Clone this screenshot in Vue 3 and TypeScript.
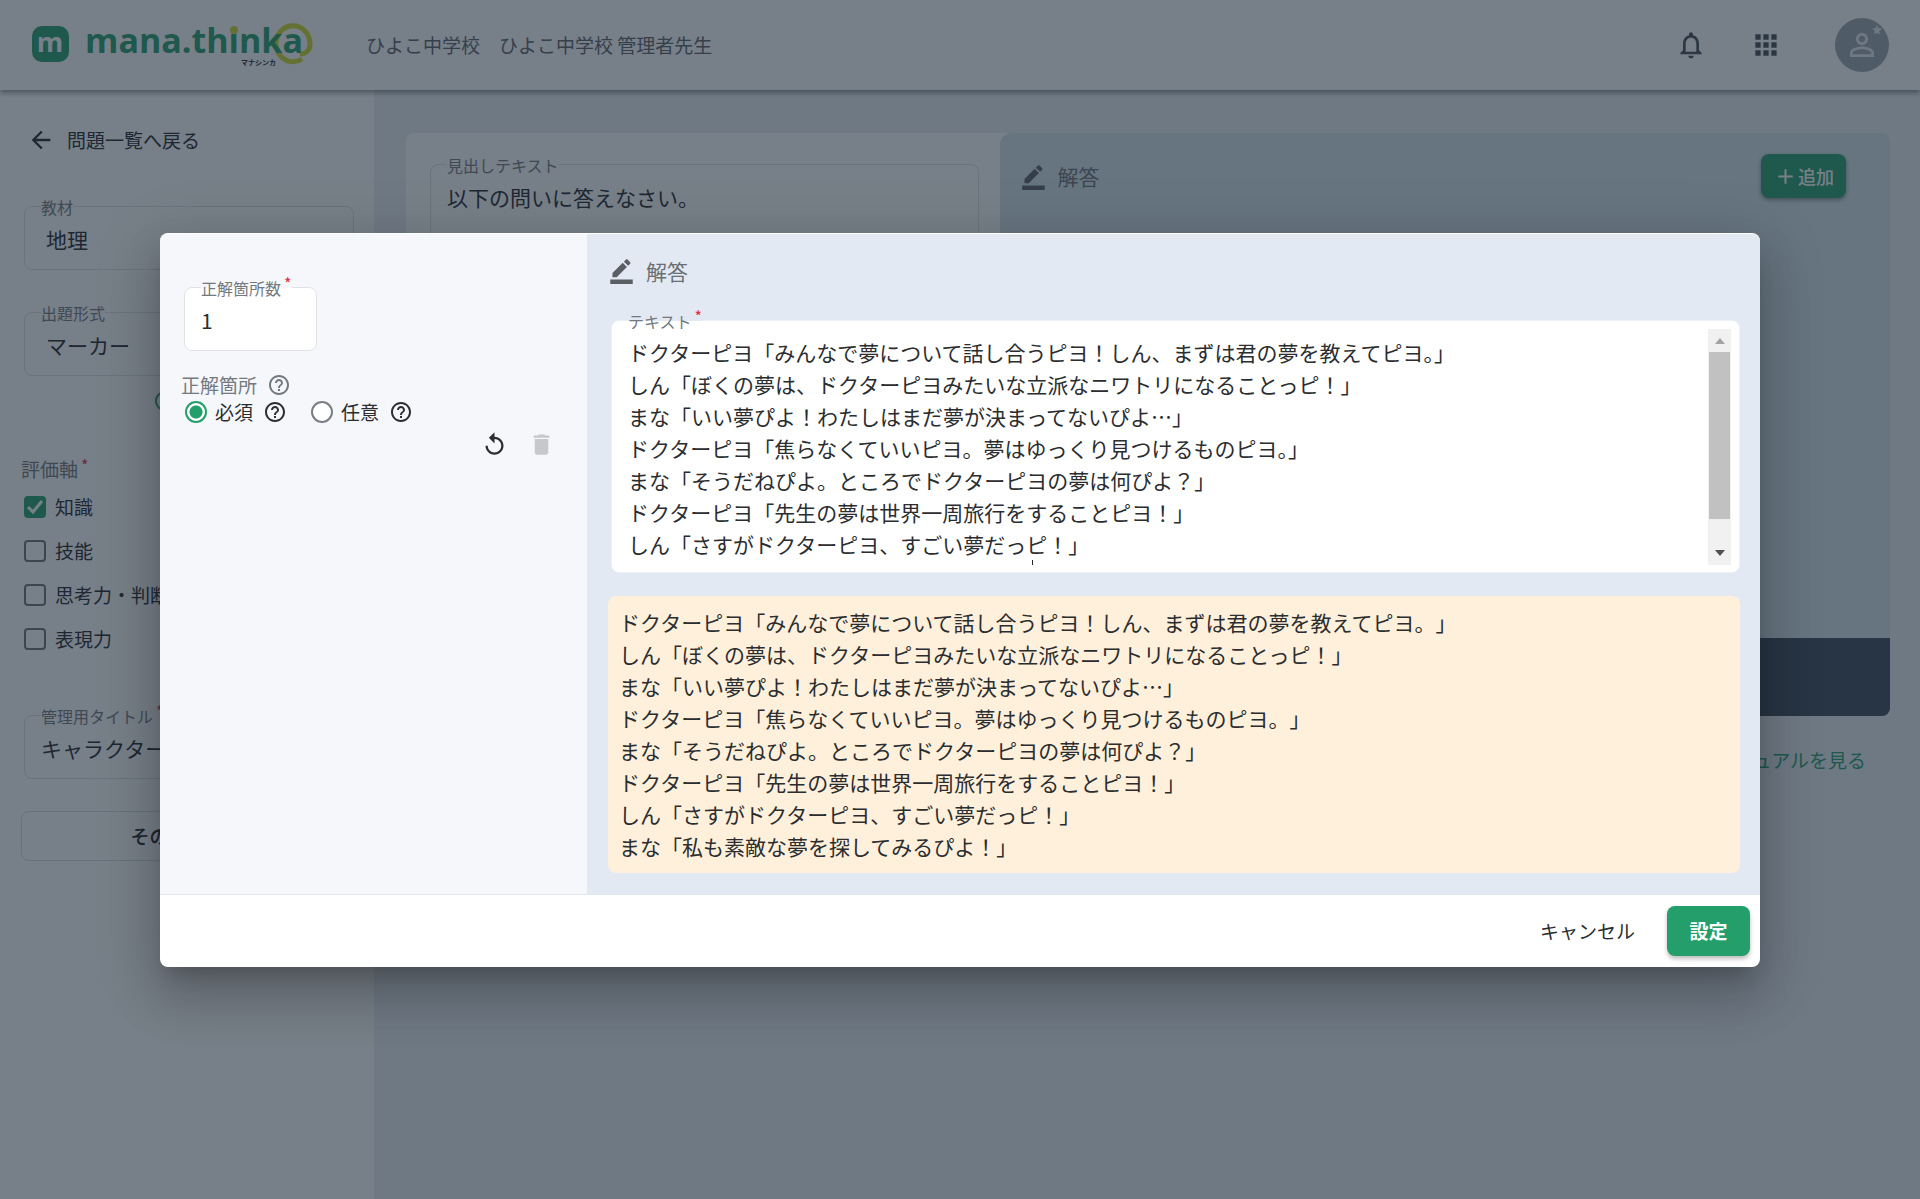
<script setup lang="ts">
import { ref } from 'vue'

const lines: string[] = [
  'ドクターピヨ「みんなで夢について話し合うピヨ！しん、まずは君の夢を教えてピヨ。」',
  'しん「ぼくの夢は、ドクターピヨみたいな立派なニワトリになることっピ！」',
  'まな「いい夢ぴよ！わたしはまだ夢が決まってないぴよ…」',
  'ドクターピヨ「焦らなくていいピヨ。夢はゆっくり見つけるものピヨ。」',
  'まな「そうだねぴよ。ところでドクターピヨの夢は何ぴよ？」',
  'ドクターピヨ「先生の夢は世界一周旅行をすることピヨ！」',
  'しん「さすがドクターピヨ、すごい夢だっピ！」',
  'まな「私も素敵な夢を探してみるぴよ！」',
]

const answerText = ref(lines.join('\n'))
const answerCount = ref('1')
const placement = ref('required')
const subject = ref('地理')
const format = ref('マーカー')
const title = ref('キャラクターの夢')
const heading = ref('以下の問いに答えなさい。')
const axes = ref([
  { label: '知識', checked: true },
  { label: '技能', checked: false },
  { label: '思考力・判断力', checked: false },
  { label: '表現力', checked: false },
])

const icons = {
  bell: 'M12 22c1.1 0 2-.9 2-2h-4c0 1.1.9 2 2 2zm6-6v-5c0-3.07-1.63-5.64-4.5-6.32V4c0-.83-.67-1.5-1.5-1.5s-1.5.67-1.5 1.5v.68C7.64 5.36 6 7.92 6 11v5l-2 2v1h16v-1l-2-2zm-2 1H8v-6c0-2.48 1.51-4.5 4-4.5s4 2.02 4 4.5v6z',
  apps: 'M4 8h4V4H4v4zm6 12h4v-4h-4v4zm-6 0h4v-4H4v4zm0-6h4v-4H4v4zm6 0h4v-4h-4v4zm6-10v4h4V4h-4zm-6 4h4V4h-4v4zm6 6h4v-4h-4v4zm0 6h4v-4h-4v4z',
  person: 'M12 5.9a2.1 2.1 0 1 1 0 4.2 2.1 2.1 0 0 1 0-4.2m0 9c2.97 0 6.1 1.46 6.1 2.1v1.1H5.9V17c0-.64 3.13-2.1 6.1-2.1M12 4C9.79 4 8 5.79 8 8s1.79 4 4 4 4-1.79 4-4-1.79-4-4-4zm0 9c-2.67 0-8 1.34-8 4v3h16v-3c0-2.66-5.33-4-8-4z',
  star: 'M12 17.27 18.18 21l-1.64-7.03L22 9.24l-7.19-.61L12 2 9.19 8.63 2 9.24l5.46 4.73L5.82 21z',
  back: 'M20 11H7.83l5.59-5.59L12 4l-8 8 8 8 1.41-1.41L7.83 13H20v-2z',
  edit: 'M22 24H2v-4h20v4zM13.06 5.19l3.75 3.75L7.75 18H4v-3.75l9.06-9.06zm4.82 2.68-3.75-3.75 1.83-1.83c.39-.39 1.02-.39 1.41 0l2.34 2.34c.39.39.39 1.02 0 1.41l-1.83 1.83z',
  help: 'M11 18h2v-2h-2v2zm1-16C6.48 2 2 6.48 2 12s4.48 10 10 10 10-4.48 10-10S17.52 2 12 2zm0 18c-4.41 0-8-3.59-8-8s3.59-8 8-8 8 3.59 8 8-3.59 8-8 8zm0-14c-2.21 0-4 1.79-4 4h2c0-1.1.9-2 2-2s2 .9 2 2c0 2-3 1.75-3 5h2c0-2.25 3-2.5 3-5 0-2.21-1.79-4-4-4z',
  replay: 'M12 5V1L7 6l5 5V7c3.31 0 6 2.69 6 6s-2.69 6-6 6-6-2.69-6-6H4c0 4.42 3.58 8 8 8s8-3.58 8-8-3.58-8-8-8z',
  trash: 'M6 19c0 1.1.9 2 2 2h8c1.1 0 2-.9 2-2V7H6v12zM19 4h-3.5l-1-1h-5l-1 1H5v2h14V4z',
  plus: 'M19 13h-6v6h-2v-6H5v-2h6V5h2v6h6v2z',
}
</script>

<template>
  <div class="page">
    <header class="topbar">
      <svg class="logo" width="288" height="44" viewBox="0 0 288 44" role="img" aria-label="mana.thinka マナシンカ">
        <rect x="0" y="3" width="37" height="36" rx="10" fill="#249f6b" />
        <text x="18" y="29" text-anchor="middle" class="mark">m</text>
        <path d="M268 31 C275 31 278 26 278 21 A17 18 0 1 0 270 36" fill="none" stroke="#d2dc28" stroke-width="5" />
        <text x="53" y="30" class="word">mana.thinka</text>
        <circle cx="202" cy="7" r="4" fill="#d2dc28" />
        <text x="209" y="42" class="kana">マナシンカ</text>
      </svg>
      <p class="school"><span>ひよこ中学校</span><span>ひよこ中学校 管理者先生</span></p>
      <nav class="tools">
        <button type="button" class="icon-btn" aria-label="お知らせ"><svg width="32" height="32" viewBox="0 0 24 24"><path :d="icons.bell" /></svg></button>
        <button type="button" class="icon-btn" aria-label="アプリ"><svg width="32" height="32" viewBox="0 0 24 24"><path :d="icons.apps" /></svg></button>
        <button type="button" class="avatar" aria-label="アカウント">
          <svg width="36" height="36" viewBox="0 0 24 24"><path :d="icons.person" /></svg>
          <svg class="star" width="12" height="12" viewBox="0 0 24 24"><path :d="icons.star" /></svg>
        </button>
      </nav>
    </header>

    <div class="body">
      <aside class="sidebar">
        <a href="#" class="back"><svg width="28" height="28" viewBox="0 0 24 24"><path :d="icons.back" /></svg>問題一覧へ戻る</a>
        <div class="field first">
          <label for="subject">教材</label>
          <select id="subject" v-model="subject"><option>地理</option></select>
        </div>
        <div class="field second">
          <label for="format">出題形式</label>
          <select id="format" v-model="format"><option>マーカー</option></select>
        </div>
        <a href="#" class="guide" aria-label="出題形式について"><svg width="24" height="24" viewBox="0 0 24 24"><path :d="icons.help" /></svg></a>
        <fieldset class="axes">
          <legend>評価軸<span class="req">*</span></legend>
          <label v-for="axis in axes" :key="axis.label"><input v-model="axis.checked" type="checkbox" />{{ axis.label }}</label>
        </fieldset>
        <div class="field">
          <label for="title">管理用タイトル<span class="req">*</span></label>
          <input id="title" v-model="title" type="text" />
        </div>
        <button type="button" class="outline">その他の設定</button>
      </aside>

      <main class="main">
        <div class="card">
          <section class="question">
            <div class="field">
              <label for="heading">見出しテキスト</label>
              <textarea id="heading" v-model="heading" rows="4"></textarea>
            </div>
          </section>
          <section class="answer">
            <div class="answer-body">
              <h2><svg width="27" height="27" viewBox="0 0 24 24"><path :d="icons.edit" /></svg>解答</h2>
              <button type="button" class="add"><svg width="25" height="25" viewBox="0 0 24 24"><path :d="icons.plus" /></svg>追加</button>
            </div>
            <div class="answer-foot"></div>
          </section>
        </div>
        <a href="#" class="manual">マニュアルを見る</a>
      </main>
    </div>

    <div class="scrim">
      <div class="dialog" role="dialog" aria-modal="true" aria-label="解答">
        <div class="content">
          <section class="options">
            <div class="field count">
              <label for="count">正解箇所数<span class="req">*</span></label>
              <input id="count" v-model="answerCount" type="text" />
            </div>
            <p class="group">正解箇所<svg width="24" height="24" viewBox="0 0 24 24"><path :d="icons.help" /></svg></p>
            <div class="radios">
              <label><input v-model="placement" type="radio" name="placement" value="required" />必須</label>
              <svg width="24" height="24" viewBox="0 0 24 24"><path :d="icons.help" /></svg>
              <label><input v-model="placement" type="radio" name="placement" value="optional" />任意</label>
              <svg width="24" height="24" viewBox="0 0 24 24"><path :d="icons.help" /></svg>
            </div>
            <div class="actions">
              <button type="button" class="icon-btn" aria-label="元に戻す"><svg width="27" height="27" viewBox="0 0 24 24"><path :d="icons.replay" /></svg></button>
              <button type="button" class="icon-btn" disabled aria-label="削除"><svg width="27" height="27" viewBox="0 0 24 24"><path :d="icons.trash" /></svg></button>
            </div>
          </section>
          <section class="editor">
            <h2><svg width="27" height="27" viewBox="0 0 24 24"><path :d="icons.edit" /></svg>解答</h2>
            <div class="field text">
              <label for="answer">テキスト<span class="req">*</span></label>
              <textarea id="answer" v-model="answerText"></textarea>
              <div class="scrollbar" aria-hidden="true">
                <svg width="10" height="6" viewBox="0 0 10 6"><path d="M0 6l5-6 5 6z" fill="#a3a3a3" /></svg>
                <div class="track"><div class="thumb"></div></div>
                <svg width="10" height="6" viewBox="0 0 10 6"><path d="M0 0l5 6 5-6z" fill="#505050" /></svg>
              </div>
              <span class="caret"></span>
            </div>
            <div class="preview"><p v-for="line in lines" :key="line">{{ line }}</p></div>
          </section>
        </div>
        <footer class="foot">
          <button type="button" class="cancel">キャンセル</button>
          <button type="button" class="submit">設定</button>
        </footer>
      </div>
    </div>
  </div>
</template>

<style>
body {
  margin: 0;
}
</style>

<style scoped>
.page,
.page * {
  box-sizing: border-box;
}
.page {
  position: relative;
  display: flex;
  flex-direction: column;
  min-height: 100vh;
  font-family: 'Noto Sans CJK JP', sans-serif;
  font-size: 19px;
  line-height: 28px;
  color: #212529;
}
h2,
p {
  margin: 0;
}
svg {
  display: block;
  flex: none;
  fill: currentColor;
}
button,
input,
select,
textarea {
  font: inherit;
  color: inherit;
  margin: 0;
}
button {
  border: 0;
  background: none;
  padding: 0;
}
a {
  color: inherit;
  text-decoration: none;
}

/* header */
.topbar {
  position: relative;
  z-index: 1;
  display: flex;
  align-items: center;
  height: 90px;
  padding: 0 31px 0 32px;
  background: #fff;
  box-shadow: 0 3px 5px rgba(0, 0, 0, 0.4);
}
.logo {
  margin-right: 46px;
  overflow: visible;
}
.mark {
  font: 700 27px 'Open Sans', sans-serif;
  fill: #fff;
}
.word {
  font: 700 34px 'Open Sans', sans-serif;
  fill: #249f6b;
}
.kana {
  font: 700 7px 'Noto Sans CJK JP', sans-serif;
  fill: #212529;
}
.school {
  display: flex;
  gap: 19px;
  color: #5b6168;
}
.tools {
  display: flex;
  align-items: center;
  margin-left: auto;
}
.tools .icon-btn {
  margin-right: 43px;
  color: #454c55;
}
.avatar {
  position: relative;
  display: flex;
  align-items: center;
  justify-content: center;
  width: 54px;
  height: 54px;
  margin-left: 10px;
  border-radius: 50%;
  background: #9ca7ad;
  color: #e9edf1;
}
.star {
  position: absolute;
  top: 6px;
  right: 6px;
}

/* sidebar */
.body {
  display: flex;
  flex: 1;
}
.sidebar {
  display: flex;
  flex-direction: column;
  width: 374px;
  padding: 36px 20px 0 24px;
  background: #fff;
}
.back {
  display: flex;
  align-items: center;
  gap: 12px;
  padding-left: 3px;
}
.field {
  position: relative;
  display: flex;
  border: 1px solid #dfe3e8;
  border-radius: 8px;
  height: 64px;
}
.field > label {
  position: absolute;
  top: -12px;
  left: 16px;
  font-size: 16px;
  line-height: 24px;
  color: #74797e;
  background: #fff;
  white-space: nowrap;
}
.field input,
.field select,
.field textarea {
  flex: 1;
  min-width: 0;
  padding: 7px 16px 5px;
  border: 0;
  outline: 0;
  background: none;
  font-size: 21px;
  line-height: 32px;
  appearance: none;
  resize: none;
}
.field select {
  padding-left: 21px;
}
.req {
  margin-left: 3px;
  font-size: 16px;
  line-height: 0;
  vertical-align: 5px;
  color: #e02b3c;
}
.first {
  margin-top: 52px;
}
.second {
  margin-top: 42px;
}
.guide {
  margin: 11px 0 0 129px;
  padding: 2px 0;
  color: #249f6b;
}
.axes {
  display: flex;
  flex-direction: column;
  gap: 16px;
  margin: 40px 0 62px;
  padding: 0;
  border: 0;
}
.axes legend {
  margin: 0 0 10px -3px;
  padding: 0;
  color: #74797e;
}
.axes label {
  display: flex;
  align-items: center;
  gap: 9px;
}
.axes input {
  appearance: none;
  width: 22px;
  height: 22px;
  border: 2px solid #6b7075;
  border-radius: 4px;
}
.axes input:checked {
  border-color: #249f6b;
  background: #249f6b url("data:image/svg+xml,%3Csvg xmlns='http://www.w3.org/2000/svg' viewBox='0 0 18 18'%3E%3Cpath d='M2 9l5 5L16 3' fill='none' stroke='white' stroke-width='3'/%3E%3C/svg%3E") center / 18px no-repeat;
}
.outline {
  height: 50px;
  margin: 32px 0 0 -3px;
  border: 1px solid #d9dee2;
  border-radius: 8px;
  font-weight: 500;
}

/* main area */
.main {
  flex: 1;
  min-width: 0;
  padding: 43px 30px 0 32px;
  background: #ebf1f5;
}
.card {
  display: grid;
  grid-template-columns: 2fr 3fr;
  height: 583px;
  border-radius: 8px;
  background: #fff;
}
.question {
  padding: 31px 21px 0 24px;
}
.question .field {
  height: 180px;
}
.question .field textarea {
  padding: 16px 16px 0;
}
.answer {
  display: flex;
  flex-direction: column;
  border-radius: 12px 8px 8px 0;
  background: #d6e6ec;
  overflow: hidden;
}
.answer-body {
  flex: 1;
  display: flex;
  align-items: flex-start;
  justify-content: space-between;
  padding: 21px 44px 0 20px;
}
h2 {
  display: flex;
  align-items: center;
  gap: 11px;
  font-size: 21px;
  line-height: 32px;
  font-weight: 400;
  color: #6b6f74;
}
h2 svg {
  color: #5a5f64;
}
.answer-body h2 {
  padding-top: 6px;
}
.add {
  display: flex;
  align-items: center;
  height: 44px;
  padding: 0 12px;
  border-radius: 8px;
  background: #249f6b;
  box-shadow: 0 2px 4px rgba(0, 0, 0, 0.4);
  font-size: 18px;
  font-weight: 500;
  color: #fff;
}
.answer-foot {
  height: 78px;
  background: #3a4856;
}
.manual {
  display: block;
  margin: 30px 24px 0 0;
  text-align: right;
  color: #249f6b;
}

/* dialog */
.scrim {
  position: absolute;
  inset: 0;
  z-index: 2;
  display: flex;
  align-items: center;
  padding: 0 160px;
  background: rgba(28, 42, 57, 0.6);
}
.dialog {
  flex: 1;
  border-top: 1px solid #fff;
  border-radius: 8px;
  overflow: hidden;
  background: #fff;
  color: #2b2d2f;
  box-shadow:
    0 15px 20px -9px rgba(0, 0, 0, 0.2),
    0 32px 50px 4px rgba(0, 0, 0, 0.14),
    0 12px 61px 11px rgba(0, 0, 0, 0.12);
}
.content {
  display: flex;
}
.options {
  width: 427px;
  padding: 53px 32px 0 24px;
  border-bottom: 1px solid #e3e7ee;
  background: #f5f7fb;
}
.count {
  width: 133px;
  background: #fff;
}
.count > label {
  background: linear-gradient(#f5f7fb 50%, #fff 50%);
}
.group {
  display: flex;
  align-items: center;
  gap: 10px;
  height: 26px;
  margin: 21px 0 0 -3px;
  color: #74797e;
}
.radios {
  display: flex;
  align-items: center;
  padding-left: 1px;
}
.radios label {
  display: flex;
  align-items: center;
  gap: 8px;
  margin-right: 10px;
}
.radios svg {
  margin-right: 24px;
}
.radios input {
  appearance: none;
  width: 22px;
  height: 22px;
  border: 2px solid #7b7f83;
  border-radius: 50%;
  background: #fff;
}
.radios input:checked {
  border-color: #249f6b;
  background: radial-gradient(#249f6b 6px, #fff 7px);
}
.actions {
  display: flex;
  justify-content: flex-end;
  gap: 20px;
  padding: 5px 0;
}
.icon-btn:disabled {
  color: #c6c8cb;
}
.editor {
  flex: 1;
  min-width: 0;
  padding: 21px 20px 22px 21px;
  background: #e2e9f3;
}
.text {
  height: 253px;
  margin: 33px 0 23px 3px;
  padding: 8px 8px 7px 0;
  border-color: #edf1f7;
  background: #fff;
}
.text > label {
  background: linear-gradient(#e2e9f3 50%, #fff 50%);
}
.text textarea {
  padding: 7px 16px 0;
  overflow: hidden;
}
.scrollbar {
  display: flex;
  flex-direction: column;
  align-items: center;
  width: 23px;
  padding: 9px 1px;
  background: #f1f1f1;
}
.track {
  flex: 1;
  align-self: stretch;
  margin: 8px 0;
}
.thumb {
  height: 88%;
  background: #c1c1c1;
}
.caret {
  position: absolute;
  bottom: 7px;
  left: 420px;
  width: 1px;
  height: 5px;
  background: #212529;
}
.preview {
  padding: 10px 11px 11px;
  border-radius: 8px;
  background: #fef0db;
  font-size: 21px;
  line-height: 32px;
  text-spacing-trim: space-all;
}
.foot {
  display: flex;
  align-items: center;
  justify-content: flex-end;
  gap: 32px;
  padding: 11px 10px;
}
.submit {
  width: 83px;
  height: 50px;
  border-radius: 8px;
  background: #249f6b;
  box-shadow: 0 3px 4px rgba(0, 0, 0, 0.25);
  font-weight: 700;
  color: #fff;
}
</style>
